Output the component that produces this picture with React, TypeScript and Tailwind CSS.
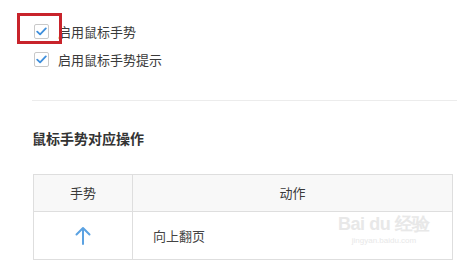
import React from "react";

function Check() {
  return (
    <span className="flex h-[15px] w-[15px] shrink-0 items-center justify-center rounded-[2px] border border-[#c9c9c9] bg-white">
      <svg width="11" height="9" viewBox="0 0 11 9" fill="none">
        <path d="M1.2 4.6 L4.1 7.4 L9.8 1.4" stroke="#3f8fdc" strokeWidth="1.8" strokeLinecap="round" strokeLinejoin="round" />
      </svg>
    </span>
  );
}

function Row({ label }: { label: string }) {
  return (
    <div className="flex h-[28px] items-center gap-[9px] pl-[2px]">
      <Check />
      <span className="text-[13px] leading-none text-[#3a3a3a]">{label}</span>
    </div>
  );
}

export default function App() {
  return (
    <div
      className="relative h-[261px] w-[457px] overflow-hidden bg-white"
      style={{ fontFamily: '"Noto Sans CJK SC", "Noto Sans", sans-serif' }}
    >
      <div className="flex flex-col pl-[32px] pt-[17px]">
        <Row label="启用鼠标手势" />
        <Row label="启用鼠标手势提示" />
        <div className="mt-[27px] h-[1px] w-full bg-[#ececec]" />
        <div className="mt-[27px] flex h-[20px] items-center text-[14px] font-bold text-[#333]">
          鼠标手势对应操作
        </div>
        <div className="ml-[1px] mt-[26px] w-[420px] border border-[#dedede]">
          <div className="flex h-[37px] border-b border-[#dedede] bg-[#f8f8f8] text-[13px] text-[#3a3a3a]">
            <div className="flex w-[99px] items-center justify-center border-r border-[#dedede]">手势</div>
            <div className="flex flex-1 items-center justify-center">动作</div>
          </div>
          <div className="flex h-[47px] text-[13px] text-[#444]">
            <div className="flex w-[99px] items-center justify-center border-r border-[#dedede]">
              <svg width="16" height="19" viewBox="0 0 16 19" fill="none">
                <path d="M8 18 V2 M1.5 8.5 L8 2 L14.5 8.5" stroke="#5ba2e2" strokeWidth="2" strokeLinecap="round" strokeLinejoin="round" />
              </svg>
            </div>
            <div className="flex flex-1 items-center pl-[20px]">向上翻页</div>
          </div>
        </div>
      </div>
      <div className="absolute left-[17px] top-[13px] h-[31px] w-[45px] border-[3px] border-[#c8232b]" />
      <div className="pointer-events-none absolute left-[338px] top-[215px] flex flex-col items-center leading-none text-[#e8e8e8]">
        <span className="text-[18px] font-bold tracking-tight" style={{ fontFamily: '"Liberation Sans", sans-serif' }}>Bai du 经验</span>
        <span className="mt-[4px] text-[8px]" style={{ fontFamily: '"Liberation Sans", sans-serif' }}>jingyan.baidu.com</span>
      </div>
    </div>
  );
}
